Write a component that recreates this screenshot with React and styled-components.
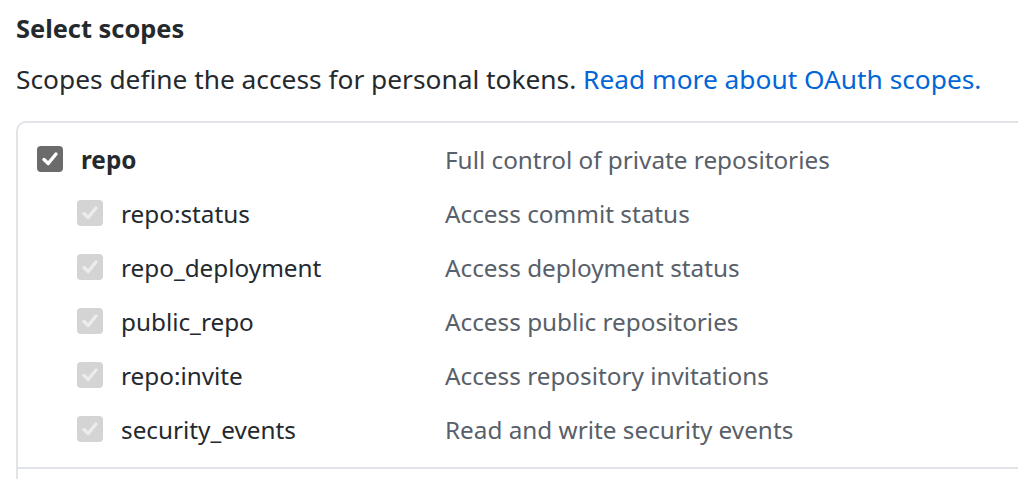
import React from "react";
import styled, { createGlobalStyle } from "styled-components";

const GlobalStyle = createGlobalStyle`
    html, body {
        margin: 0;
        padding: 0;
        background: #fff;
        overflow: hidden;
    }
    body {
        font-family: "Noto Sans", "Open Sans", sans-serif;
        color: #24292e;
    }
`;

const Page = styled.div`
    width: 1018px;
    height: 479px;
    box-sizing: border-box;
    padding: 9px 0 0 16px;
    overflow: hidden;
`;

const Heading = styled.h3`
    margin: 0;
    font-size: 25.4px;
    font-weight: 700;
    line-height: 38px;
    color: #24292e;
`;

const Lead = styled.p`
    margin: 6px 0 0;
    font-size: 26.3px;
    line-height: 52px;
    color: #24292e;
    white-space: nowrap;
    a {
        color: #0366d6;
        text-decoration: none;
    }
`;

const ScopeBox = styled.div`
    margin-top: 16px;
    width: 1100px;
    border: 2px solid #e1e4e8;
    border-radius: 10px 0 0 0;
`;

const Group = styled.div`
    padding: 9px 0 11px;
    border-bottom: 2px solid #e1e4e8;
    & + & {
        border-bottom: none;
        height: 40px;
    }
`;

const Row = styled.div`
    display: grid;
    grid-template-columns: 408px 1fr;
    align-items: center;
    height: 54px;
    padding-left: 19px;
    font-size: 24.3px;
`;

const Name = styled.label`
    display: flex;
    align-items: center;
    gap: 18px;
    padding-left: ${(p) => (p.$nested ? "40px" : "0")};
    font-weight: ${(p) => (p.$nested ? 400 : 700)};
    color: #24292e;
`;

const Desc = styled.span`
    color: #586069;
    white-space: nowrap;
`;

const Box = styled.span`
    display: inline-flex;
    align-items: center;
    justify-content: center;
    width: 26px;
    height: 26px;
    border-radius: 4px;
    background: ${(p) => (p.$disabled ? "#d4d4d4" : "#6b6b6b")};
    flex-shrink: 0;
`;

const Check = ({ disabled }) => (
    <Box $disabled={disabled}>
        <svg width="20" height="20" viewBox="0 0 20 20">
            <path
                d="M4 10.5 L8.2 14.5 L16 5"
                fill="none"
                stroke={disabled ? "#ececec" : "#fff"}
                strokeWidth="3.4"
                strokeLinecap="round"
                strokeLinejoin="round"
            />
        </svg>
    </Box>
);

const subScopes = [
    ["repo:status", "Access commit status"],
    ["repo_deployment", "Access deployment status"],
    ["public_repo", "Access public repositories"],
    ["repo:invite", "Access repository invitations"],
    ["security_events", "Read and write security events"],
];

const App = () => {
    return (
        <Page>
            <GlobalStyle />
            <Heading>Select scopes</Heading>
            <Lead>
                Scopes define the access for personal tokens.{" "}
                <a href="#">Read more about OAuth scopes.</a>
            </Lead>
            <ScopeBox>
                <Group>
                    <Row>
                        <Name>
                            <Check />
                            repo
                        </Name>
                        <Desc>Full control of private repositories</Desc>
                    </Row>
                    {subScopes.map(([name, desc]) => (
                        <Row key={name}>
                            <Name $nested>
                                <Check disabled />
                                {name}
                            </Name>
                            <Desc>{desc}</Desc>
                        </Row>
                    ))}
                </Group>
                <Group />
            </ScopeBox>
        </Page>
    );
};

export default App;
